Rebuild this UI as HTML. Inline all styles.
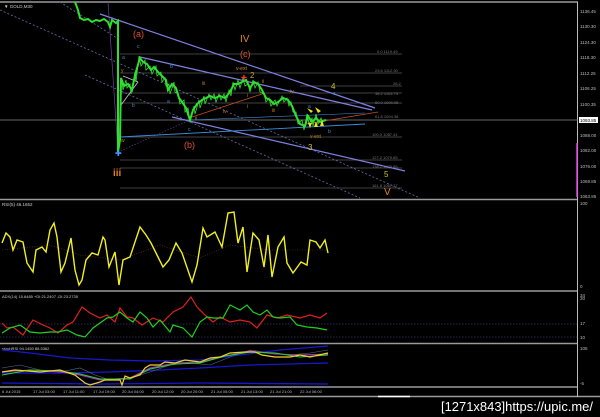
<!DOCTYPE html>
<html><head><meta charset="utf-8"><style>
html,body{margin:0;padding:0;background:#000;width:600px;height:417px;overflow:hidden}
svg{display:block}
text{font-family:"Liberation Sans",sans-serif}
</style></head><body>
<svg width="600" height="417" viewBox="0 0 600 417" xmlns="http://www.w3.org/2000/svg">
<rect width="600" height="417" fill="#000"/>
<g stroke="#9a9a9a" stroke-width="1.5" fill="none">
<line x1="0" y1="2" x2="578" y2="2"/>
<line x1="0" y1="199.5" x2="578" y2="199.5"/>
<line x1="0" y1="291" x2="578" y2="291"/>
<line x1="0" y1="343.5" x2="578" y2="343.5"/>
<line x1="0" y1="387" x2="578" y2="387"/>
<line x1="0" y1="396.5" x2="600" y2="396.5"/>
</g>
<line x1="577.5" y1="2" x2="577.5" y2="397" stroke="#bbb" stroke-width="1"/>
<line x1="577" y1="143" x2="577" y2="197" stroke="#e040e0" stroke-width="1.5"/>
<g fill="#bbb" font-size="4.5">
<text x="580" y="13">1136.45</text><text x="580" y="28">1130.30</text><text x="580" y="44">1124.30</text>
<text x="580" y="59">1118.30</text><text x="580" y="75">1112.25</text><text x="580" y="90">1106.25</text>
<text x="580" y="106">1100.35</text><text x="580" y="137">1088.00</text><text x="580" y="152">1082.00</text>
<text x="580" y="168">1076.00</text><text x="580" y="183">1069.85</text><text x="580" y="198">1063.85</text>
<text x="580" y="205">100</text><text x="580" y="288">0</text>
<text x="580" y="297">34</text><text x="580" y="300">30</text><text x="580" y="325">17</text><text x="580" y="339">10</text>
<text x="580" y="350">105</text><text x="580" y="385">-5</text>
</g>
<rect x="579" y="117" width="19" height="6" fill="#fff"/>
<text x="580" y="122" font-size="4.5" fill="#000">1093.85</text>
<line x1="0" y1="120" x2="578" y2="120" stroke="#888" stroke-width="0.8"/>
<g stroke="#555" stroke-width="0.7">
<line x1="120" y1="54" x2="402" y2="54"/><line x1="120" y1="73" x2="402" y2="73"/>
<line x1="300" y1="86" x2="402" y2="86"/><line x1="120" y1="93" x2="402" y2="93"/>
<line x1="120" y1="103" x2="402" y2="103"/><line x1="120" y1="137" x2="402" y2="137"/>
<line x1="120" y1="160" x2="402" y2="160"/><line x1="120" y1="168" x2="402" y2="168"/>
<line x1="120" y1="188" x2="402" y2="188"/>
</g>
<g fill="#777" font-size="4">
<text x="377" y="53">0.0 1119.49</text><text x="375" y="72">23.6 1112.30</text><text x="393" y="85">26.2</text>
<text x="375" y="95">38.2 1103.75</text><text x="375" y="104">50.0 1099.05</text><text x="375" y="118">61.8 1094.38</text>
<text x="372" y="136">100.0 1087.41</text><text x="372" y="159">127.2 1079.85</text><text x="372" y="168">138.2 1075.85</text>
<text x="372" y="187">161.8 1067.27</text>
</g>
<g stroke="#6a6aa8" stroke-width="0.8" stroke-dasharray="2,2" fill="none">
<line x1="0" y1="10" x2="420" y2="198"/>
<line x1="85" y1="75" x2="360" y2="198"/>
<line x1="60" y1="2" x2="120" y2="40"/>
</g>
<g stroke="#8080e0" stroke-width="1.2" fill="none">
<line x1="140" y1="57" x2="372" y2="110"/>
<line x1="172" y1="117" x2="405" y2="171"/>
<line x1="100" y1="14" x2="375" y2="108"/>
</g>
<line x1="120" y1="137" x2="365" y2="124" stroke="#3b8ed8" stroke-width="0.9"/>
<line x1="190" y1="120" x2="365" y2="113" stroke="#3b8ed8" stroke-width="0.6"/>
<line x1="192" y1="117" x2="265" y2="93" stroke="#c05020" stroke-width="0.8"/>
<line x1="300" y1="125" x2="378" y2="112" stroke="#c05020" stroke-width="0.8"/>
<line x1="121" y1="105" x2="138" y2="82" stroke="#ccc" stroke-width="0.8"/>
<line x1="123" y1="76" x2="138" y2="82" stroke="#ccc" stroke-width="0.8"/>
<line x1="108" y1="2" x2="118" y2="152" stroke="#7040a0" stroke-width="0.7"/>
<line x1="118" y1="152" x2="190" y2="120" stroke="#7040a0" stroke-width="0.6" stroke-dasharray="1.5,1.5"/>
<polyline fill="none" stroke="#30e030" stroke-width="2" points="75,2 78,10 80,18 84,20 88,19 92,22 96,20 100,21 104,19 108,22 110,27 112,20 116,23 118,21 118,152 120,140 121,78 124,86 128,84 132,90 134,80 137,68 140,58 143,62 147,64 151,70 154,67 158,72 162,76 166,80 168,90 172,84 176,88 179,98 182,102 186,108 190,120 193,110 197,104 202,100 206,98 210,96 215,98 220,96 225,98 230,92 234,84 238,84 242,82 246,80 250,88 254,82 258,84 262,90 266,98 270,100 274,104 278,102 283,98 288,100 292,106 296,116 300,124 305,126 308,116 312,122 316,118 320,122 326,120"/>
<polyline fill="none" stroke="#30e030" stroke-width="0.8" points="122,82 123,90 126,80 127,88 130,84 131,94 135,72 136,82 139,56 141,66 145,60 146,70 150,66 152,74 156,66 157,76 161,72 162,82 165,78 166,86 169,84 170,94 174,82 175,92 178,94 180,104 184,100 185,112 188,108 190,122 194,106 195,114 199,100 200,108 204,96 205,104 209,94 211,100 214,94 216,102 219,94 221,100 224,94 226,102 229,90 231,96 233,82 235,90 238,80 240,88 243,78 245,86 248,84 250,92 253,80 255,88 258,82 260,92 264,94 266,102 269,98 271,106 275,100 277,106 282,96 284,102 287,98 289,106 291,102 293,112 296,112 298,124 302,120 304,130 307,114 309,124 312,118 313,126 316,114 318,124 321,118 323,124"/>
<text x="115" y="156" font-size="8" fill="#3aa0ff">✚</text>
<text x="241" y="80" font-size="7" fill="#ff3030">✚</text>
<g font-size="5" fill="#3a90d0"><text x="122" y="59">a</text><text x="137" y="48">c</text><text x="170" y="68">b</text><text x="167" y="103">a</text><text x="132" y="107">b</text><text x="188" y="131">c</text><text x="308" y="108">a</text><text x="328" y="133">b</text><text x="333" y="95">c</text></g>
<g font-size="5" fill="#c08020"><text x="121" y="72">y</text><text x="121" y="142">w</text><text x="202" y="85">iii</text><text x="223" y="113">iv</text><text x="195" y="120">ii</text><text x="262" y="83">ii</text><text x="290" y="93">iv</text><text x="272" y="112">iii</text><text x="247" y="108">i</text><text x="247" y="97">i</text><text x="310" y="138">v-ext</text></g>
<text x="236" y="70" font-size="5" fill="#e08040">v-ext</text>
<text x="250" y="78" font-size="8" fill="#d0a030">2</text>
<text x="308" y="150" font-size="8" fill="#d0c030">3</text>
<text x="331" y="89" font-size="8" fill="#d0c030">4</text>
<text x="384" y="177" font-size="8" fill="#d0c030">5</text>
<text x="384" y="195" font-size="10" fill="#e08020">V</text>
<text x="240" y="42" font-size="10" fill="#e08020">IV</text>
<text x="240" y="57" font-size="9" fill="#e05030">(c)</text>
<text x="133" y="37" font-size="9" fill="#e05030">(a)</text>
<text x="184" y="148" font-size="9" fill="#e05030">(b)</text>
<text x="113" y="176" font-size="10" fill="#e08020" font-weight="bold">iii</text>
<g fill="#f0e020"><polygon points="307,108 313,111 311,113"/><polygon points="315,107 321,111 318,113"/><polygon points="314,127 316,121 318,127"/><polygon points="320,126 322,120 324,126"/><polygon points="308,123 312,123 310,128"/></g>
<text x="4" y="8" font-size="4.5" fill="#ccc">▼ GOLD,M30</text>
<text x="2" y="206" font-size="4.5" fill="#ccc">RSI(5) 46.1652</text>
<polyline fill="none" stroke="#803030" stroke-width="0.6" stroke-dasharray="1,1.5" points="2,250 50,245 80,255 120,260 160,245 200,258 230,245 270,250 328,250"/>
<polyline fill="none" stroke="#f0f020" stroke-width="1.4" points="2,243 6,233 10,237 13,250 17,240 23,242 27,263 33,272 36,250 42,247 46,252 50,230 54,223 57,237 61,272 65,263 71,238 75,270 79,285 82,280 86,260 92,253 98,255 103,237 105,240 109,267 115,252 119,285 123,260 130,257 140,227 146,235 151,243 157,255 163,267 169,260 176,243 182,253 192,282 197,265 203,228 207,237 215,232 222,247 228,213 234,212 238,243 243,227 247,272 253,233 259,240 264,267 268,235 272,277 278,247 284,237 287,263 293,273 301,262 307,265 310,240 316,242 320,248 325,240 328,253"/>
<text x="2" y="298" font-size="4" fill="#ccc">ADX(14) 15.6485 +DI:21.2407 -DI:23.2735</text>
<g stroke="#5050a0" stroke-width="0.5" stroke-dasharray="1.5,1.5"><line x1="0" y1="324" x2="578" y2="324"/><line x1="0" y1="337" x2="578" y2="337"/></g>
<polyline fill="none" stroke="#e02020" stroke-width="1.2" points="2,323 7,328 13,327 23,335 33,320 43,325 50,328 58,333 67,325 73,322 82,307 90,313 100,318 107,315 115,322 120,308 127,317 133,318 142,325 153,318 163,322 173,312 183,307 191,297 197,307 205,315 213,322 220,317 230,322 240,320 250,322 257,328 267,315 277,318 287,315 300,318 310,315 320,318 327,313"/>
<polyline fill="none" stroke="#20d020" stroke-width="1.2" points="2,333 10,328 20,325 30,332 40,333 50,332 58,332 67,330 77,335 85,337 93,328 100,323 107,318 113,317 120,312 127,318 133,322 140,312 147,318 153,327 160,320 170,332 173,325 183,328 192,337 200,322 207,317 213,318 223,318 230,305 240,310 247,305 253,312 260,315 267,310 273,317 280,318 290,317 297,325 307,327 317,328 327,330"/>
<text x="2" y="350" font-size="4" fill="#ccc">stochRSI 94.1450 88.5362</text>
<g fill="none" stroke="#1818d0" stroke-width="1.3">
<polyline points="2,350 30,353 70,358 110,360 150,361 200,360 240,355 280,350 328,346"/>
<polyline points="2,373 60,373 110,372 160,370 200,368 250,365 328,363"/>
<polyline points="2,383 100,384 200,383 328,384"/>
</g>
<polyline fill="none" stroke="#5a6a9a" stroke-width="0.6" points="2,368 20,365 40,370 60,372 80,368 95,375 110,380 130,378 150,372 170,365 190,363 210,365 230,357 250,350 270,353 290,355 310,353 328,350"/>
<polyline fill="none" stroke="#b030c0" stroke-width="1" points="2,372 30,370 60,372 80,375 100,380 130,378 150,368 175,363 200,362 225,356 250,351 275,354 300,355 328,354"/>
<polyline fill="none" stroke="#30d030" stroke-width="1.1" points="2,375 30,370 60,371 80,374 100,379 130,379 150,369 175,364 200,363 225,356 250,352 275,353 300,357 328,355"/>
<polyline fill="none" stroke="#f0d030" stroke-width="1.2" points="2,372 15,370 40,372 60,370 75,375 85,383 90,385 100,382 105,380 120,380 122,385 125,376 130,378 140,375 145,368 150,365 160,365 165,362 175,363 185,360 200,362 210,358 220,357 230,353 245,352 255,352 262,355 275,357 290,357 300,355 310,357 328,353"/>
<g fill="#bbb" font-size="4"><text x="2" y="393">6 Jul 2015</text><text x="33" y="393">17 Jul 03:00</text><text x="63" y="393">17 Jul 11:00</text><text x="93" y="393">17 Jul 19:00</text><text x="122" y="393">20 Jul 04:00</text><text x="152" y="393">20 Jul 12:00</text><text x="181" y="393">20 Jul 20:00</text><text x="211" y="393">21 Jul 05:00</text><text x="241" y="393">21 Jul 13:00</text><text x="270" y="393">21 Jul 21:00</text><text x="300" y="393">22 Jul 06:00</text></g>
<line x1="378" y1="396.5" x2="410" y2="396.5" stroke="#fff" stroke-width="1.5"/>
<text x="441" y="411" font-size="12.5" fill="#fff" font-family="Liberation Sans Narrow, Liberation Sans, sans-serif" textLength="152" lengthAdjust="spacingAndGlyphs">[1271x843]https://upic.me/</text>
</svg>
</body></html>
